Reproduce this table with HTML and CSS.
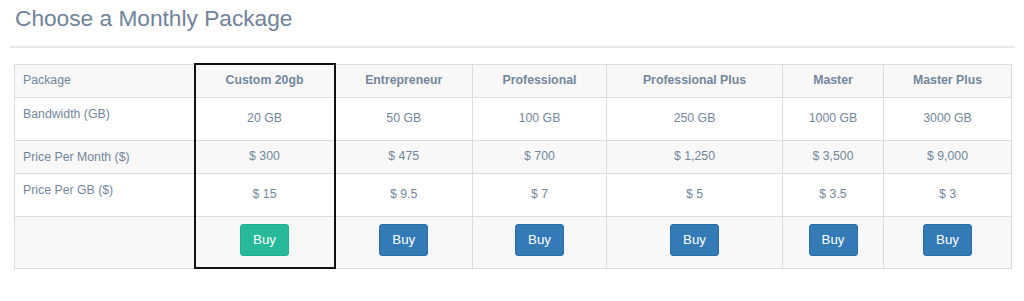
FILE: index.html
```html
<!DOCTYPE html>
<html>
<head>
<meta charset="utf-8">
<link rel="stylesheet" href="styles.css">
</head>
<body>
<div class="page">
  <div class="title-bar">
    <h2 class="title">Choose a Monthly Package</h2>
  </div>
  <div class="table-wrap">
    <table class="plans">
      <colgroup>
        <col class="c-label"><col class="c-custom"><col class="c-ent"><col class="c-pro"><col class="c-proplus"><col class="c-master"><col class="c-mplus">
      </colgroup>
      <tr class="r-head odd">
        <td class="label">Package</td>
        <td class="hl hl-top name">Custom 20gb</td>
        <td class="name">Entrepreneur</td>
        <td class="name">Professional</td>
        <td class="name">Professional Plus</td>
        <td class="name">Master</td>
        <td class="name">Master Plus</td>
      </tr>
      <tr class="r-tall">
        <td class="label">Bandwidth (GB)</td>
        <td class="hl val">20 GB</td>
        <td class="val">50 GB</td>
        <td class="val">100 GB</td>
        <td class="val">250 GB</td>
        <td class="val">1000 GB</td>
        <td class="val">3000 GB</td>
      </tr>
      <tr class="r-short odd">
        <td class="label">Price Per Month ($)</td>
        <td class="hl val">$ 300</td>
        <td class="val">$ 475</td>
        <td class="val">$ 700</td>
        <td class="val">$ 1,250</td>
        <td class="val">$ 3,500</td>
        <td class="val">$ 9,000</td>
      </tr>
      <tr class="r-tall">
        <td class="label">Price Per GB ($)</td>
        <td class="hl val">$ 15</td>
        <td class="val">$ 9.5</td>
        <td class="val">$ 7</td>
        <td class="val">$ 5</td>
        <td class="val">$ 3.5</td>
        <td class="val">$ 3</td>
      </tr>
      <tr class="r-btn odd">
        <td class="label"></td>
        <td class="hl hl-bottom act"><button class="btn btn-green">Buy</button></td>
        <td class="act"><button class="btn btn-blue">Buy</button></td>
        <td class="act"><button class="btn btn-blue">Buy</button></td>
        <td class="act"><button class="btn btn-blue">Buy</button></td>
        <td class="act"><button class="btn btn-blue">Buy</button></td>
        <td class="act"><button class="btn btn-blue">Buy</button></td>
      </tr>
    </table>
  </div>
</div>
</body>
</html>
```
FILE: styles.css
```css
html, body {
  margin: 0;
  padding: 0;
  background: #ffffff;
}
body {
  font-family: "Liberation Sans", Arial, sans-serif;
  color: #73879C;
}
.page {
  padding: 5px 9px 0 10px;
}
.title-bar {
  border-bottom: 2px solid #E6E9ED;
  padding: 0 0 14px 5px;
}
.title {
  margin: 0;
  font-size: 22.7px;
  font-weight: 400;
  line-height: 27px;
  color: #6f8399;
}
.table-wrap {
  padding: 15px 0 0 4px;
}
.plans {
  border-collapse: collapse;
  table-layout: fixed;
  width: 997px;
  font-size: 12.3px;
  line-height: 17px;
  border: 1px solid #e3e3e3;
}
.c-label { width: 180px; }
.c-custom { width: 140px; }
.c-ent { width: 138px; }
.c-pro { width: 134px; }
.c-proplus { width: 176px; }
.c-master { width: 101px; }
.c-mplus { width: 128px; }
.plans td {
  border: 1px solid #dddddd;
  padding: 7px 8px;
  text-align: center;
  vertical-align: middle;
}
.plans tr.odd td { background: #f8f8f8; }
.r-head { height: 33px; }
.r-tall { height: 43px; }
.r-short { height: 32px; }
.r-btn { height: 52px; }
.plans td.label {
  text-align: left;
  vertical-align: top;
  padding-left: 8px;
  padding-top: 8px;
}
.plans td.name { font-weight: 700; }
.plans tr.r-head td.label { vertical-align: middle; padding-top: 7px; }
.plans td.act {
  vertical-align: top;
  padding-top: 7px;
}
.plans td.hl {
  border-left: 2px solid #111111;
  border-right: 2px solid #111111;
}
.plans td.hl-top { border-top: 2px solid #111111; }
.plans td.hl-bottom { border-bottom: 2px solid #111111; }
.btn {
  font-family: "Liberation Sans", Arial, sans-serif;
  font-size: 13.3px;
  line-height: 18px;
  padding: 6px 11px;
  border-radius: 3px;
  color: #ffffff;
  cursor: pointer;
  width: 49px;
  height: 32px;
}
.btn-blue {
  background: #337ab7;
  border: 1px solid #2e6da4;
}
.btn-green {
  background: #26B99A;
  border: 1px solid #1fb08f;
}
```
